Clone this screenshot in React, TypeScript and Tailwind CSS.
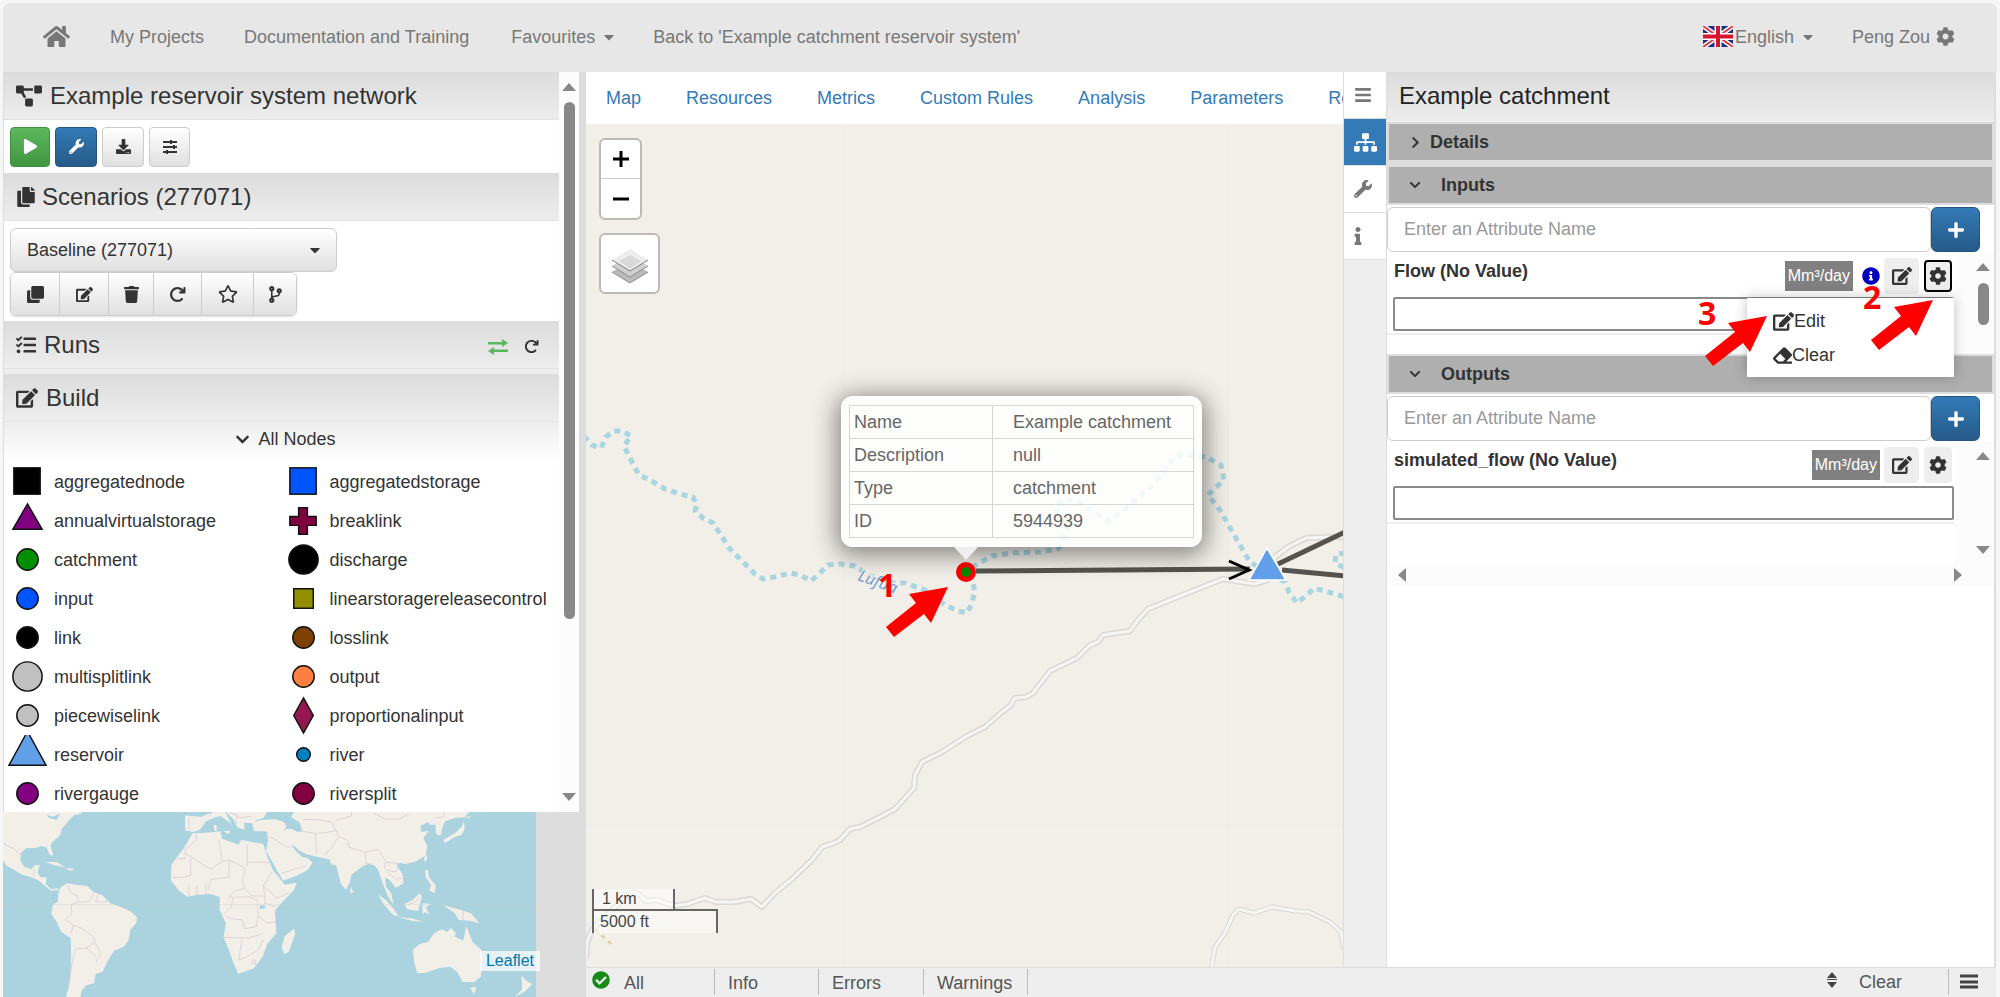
import React, { useState } from "react";
import {
  FaBars,
  FaCaretDown,
  FaCheckCircle,
  FaChevronDown,
  FaChevronRight,
  FaClone,
  FaCodeBranch,
  FaCog,
  FaCopy,
  FaDownload,
  FaEdit,
  FaEraser,
  FaHome,
  FaInfo,
  FaInfoCircle,
  FaPlay,
  FaPlus,
  FaProjectDiagram,
  FaRegStar,
  FaSitemap,
  FaTasks,
  FaTrash,
  FaWrench,
} from "react-icons/fa";
import { FaArrowRotateRight } from "react-icons/fa6";

const tabs = [
  "Map",
  "Resources",
  "Metrics",
  "Custom Rules",
  "Analysis",
  "Parameters",
  "Reports",
];

const outline = { stroke: "#111", strokeWidth: 1.5 };

const nodeTypes = [
  { name: "aggregatednode", shape: <rect x="6" y="6" width="27" height="27" fill="#000" {...outline} /> },
  { name: "aggregatedstorage", shape: <rect x="6" y="6" width="27" height="27" fill="#0055ff" {...outline} /> },
  { name: "annualvirtualstorage", shape: <path d="M20 3 L35 29 H5 Z" fill="#800080" {...outline} /> },
  { name: "breaklink", shape: <path d="M15 7 h9 v9 h9 v9 h-9 v9 h-9 v-9 h-9 v-9 h9 Z" fill="#800040" {...outline} /> },
  { name: "catchment", shape: <circle cx="20" cy="20" r="11" fill="#008f00" {...outline} /> },
  { name: "discharge", shape: <circle cx="20" cy="20" r="15" fill="#000" {...outline} /> },
  { name: "input", shape: <circle cx="20" cy="20" r="11" fill="#0055ff" {...outline} /> },
  { name: "linearstoragereleasecontrol", shape: <rect x="10" y="10" width="20" height="20" fill="#929000" {...outline} /> },
  { name: "link", shape: <circle cx="20" cy="20" r="11" fill="#000" {...outline} /> },
  { name: "losslink", shape: <circle cx="20" cy="20" r="11" fill="#804000" {...outline} /> },
  { name: "multisplitlink", shape: <circle cx="20" cy="20" r="15" fill="#c0c0c0" {...outline} /> },
  { name: "output", shape: <circle cx="20" cy="20" r="11" fill="#ff8040" {...outline} /> },
  { name: "piecewiselink", shape: <circle cx="20" cy="20" r="11" fill="#c0c0c0" {...outline} /> },
  { name: "proportionalinput", shape: <path d="M20 2 L30 20 L20 38 L10 20 Z" fill="#941751" {...outline} /> },
  { name: "reservoir", shape: <path d="M18 0 L1 31 H39 L22 0" fill="#629fe9" {...outline} /> },
  { name: "river", shape: <circle cx="20" cy="20" r="7" fill="#0080c0" {...outline} /> },
  { name: "rivergauge", shape: <circle cx="20" cy="20" r="11" fill="#800080" {...outline} /> },
  { name: "riversplit", shape: <circle cx="20" cy="20" r="11" fill="#800040" {...outline} /> },
];

const popupRows = [
  ["Name", "Example catchment"],
  ["Description", "null"],
  ["Type", "catchment"],
  ["ID", "5944939"],
];

const scenarioActions = [
  { label: "Clone", icon: <FaClone />, width: "w-[48px]" },
  { label: "Edit", icon: <FaEdit />, width: "w-[49px]" },
  { label: "Delete", icon: <FaTrash />, width: "w-[45px]" },
  { label: "Reload", icon: <FaArrowRotateRight />, width: "w-[48px]" },
  { label: "Favourite", icon: <FaRegStar size={20} />, width: "w-[52px]" },
  { label: "Branch", icon: <FaCodeBranch />, width: "w-[43px]" },
];

const Triangle = ({ dir, className = "" }: { dir: "up" | "down" | "left" | "right"; className?: string }) => {
  const paths = {
    up: "M1 11 L8 3 L15 11 Z",
    down: "M1 5 L8 13 L15 5 Z",
    left: "M12 1 L4 8 L12 15 Z",
    right: "M4 1 L12 8 L4 15 Z",
  };
  return (
    <svg viewBox="0 0 16 16" className={`size-4 shrink-0 ${className}`} fill="#888">
      <path d={paths[dir]} />
    </svg>
  );
};

const PanelHeader = ({ icon, title, children }: { icon?: React.ReactNode; title: string; children?: React.ReactNode }) => (
  <div className="flex h-12 shrink-0 items-center border-b border-[#e3e3e3] bg-linear-to-b from-[#dcdcdc] to-[#ededed] px-3 text-2xl text-[#333]">
    {icon}
    <h2 className="grow whitespace-nowrap">{title}</h2>
    {children}
  </div>
);

const UkFlag = () => (
  <svg viewBox="0 0 30 21" className="h-[21px] w-[30px]">
    <rect width="30" height="21" fill="#1b2f7f" />
    <path d="M0 0 L30 21 M30 0 L0 21" stroke="#fff" strokeWidth="5" />
    <path d="M0 0 L30 21 M30 0 L0 21" stroke="#e0404f" strokeWidth="2" />
    <path d="M15 0 V21 M0 10.5 H30" stroke="#fff" strokeWidth="7" />
    <path d="M15 0 V21 M0 10.5 H30" stroke="#d5152e" strokeWidth="4" />
  </svg>
);

const Pointer = ({ className }: { className: string }) => (
  <svg viewBox="0 0 62 50" className={`pointer-events-none absolute z-20 h-[50px] w-[62px] ${className}`} fill="#f00">
    <path d="M62 0 L23 7 L30 16 L0 40 L8 50 L38 27 L45 36 Z" />
  </svg>
);

const Navbar = () => (
  <nav className="mx-[3px] mt-[3px] flex h-[69px] shrink-0 items-center rounded-t-lg bg-[#e7e7e7] pb-[2px] text-lg whitespace-nowrap text-[#777]">
    <a href="#home" aria-label="Home" className="pl-10">
      <FaHome size={27} />
    </a>
    <a href="#projects" className="pl-10">My Projects</a>
    <a href="#docs" className="pl-10">Documentation and Training</a>
    <a href="#favourites" className="flex items-center gap-[6px] pl-[42px]">
      Favourites <FaCaretDown size={16} />
    </a>
    <a href="#back" className="pl-9">Back to 'Example catchment reservoir system'</a>
    <div className="grow" />
    <a href="#language" className="flex items-center pr-9">
      <UkFlag />
      <span className="px-[2px]">English</span>
      <FaCaretDown size={16} className="ml-1" />
    </a>
    <a href="#user" className="flex items-center gap-[6px] pr-[42px]">
      Peng Zou <FaCog size={19} />
    </a>
  </nav>
);

const toolButton = "flex h-10 items-center justify-center rounded border text-[17px]";
const lightButton = "border-[#ccc] bg-linear-to-b from-white to-[#e0e0e0] text-[#333]";
const blueButton = "border-[#245580] bg-linear-to-b from-[#337ab7] to-[#265a88] text-white";

const NetworkPanel = () => (
  <div className="flex min-h-0 grow bg-white">
    <div className="flex min-w-0 grow flex-col overflow-hidden border-l border-[#ddd]">
      <PanelHeader icon={<FaProjectDiagram size={26} className="mr-2" />} title="Example reservoir system network" />
      <div className="flex h-[53px] shrink-0 items-center gap-[5px] pl-[6px]">
        <button aria-label="Run" className={`${toolButton} w-10 border-[#3e8f3e] bg-linear-to-b from-[#5cb85c] to-[#419641] text-white`}>
          <FaPlay size={15} />
        </button>
        <button aria-label="Tools" className={`${toolButton} ${blueButton} w-[42px]`}>
          <FaWrench size={15} />
        </button>
        <button aria-label="Download" className={`${toolButton} ${lightButton} w-[42px]`}>
          <FaDownload size={15} />
        </button>
        <button aria-label="Settings" className={`${toolButton} ${lightButton} w-[41px]`}>
          <svg viewBox="0 0 16 14" className="h-[14px] w-4" stroke="currentColor" strokeWidth="2">
            <path d="M1 2 H15 M1 7 H15 M1 12 H15" />
            <path d="M9 0 V4 M12 5 V9 M5 10 V14" />
          </svg>
        </button>
      </div>

      <PanelHeader icon={<FaCopy size={20} className="mr-[6px]" />} title="Scenarios (277071)" />
      <div className="shrink-0 px-[6px] pt-[7px] pb-[5px]">
        <div className="relative w-[327px]">
          <select aria-label="Scenario" className={`h-11 w-full appearance-none rounded-md border pl-4 text-lg ${lightButton}`}>
            <option>Baseline (277071)</option>
          </select>
          <FaCaretDown className="pointer-events-none absolute top-[14px] right-[14px] text-[#333]" size={16} />
        </div>
        <div className="inline-flex overflow-hidden rounded-md border border-[#ccc] text-[#333] shadow-sm">
          {scenarioActions.map((action, i) => (
            <button
              key={action.label}
              aria-label={action.label}
              className={`flex h-[42px] items-center justify-center bg-linear-to-b from-white to-[#e0e0e0] text-[17px] ${action.width} ${i > 0 ? "border-l border-[#ccc]" : ""}`}
            >
              {action.icon}
            </button>
          ))}
        </div>
      </div>

      <div className="shrink-0 bg-[#ededed] pb-[5px]">
        <PanelHeader icon={<FaTasks size={20} className="mr-2" />} title="Runs">
          <button aria-label="Sync" className="mt-1 mr-4">
            <svg viewBox="0 0 20 16" className="h-4 w-5" fill="#5cb85c">
              <path d="M0 3 H14 V0 L20 4 L14 8 V5.500 H0 Z M20 10.500 H6 V8 L0 12 L6 16 V13 H20 Z" />
            </svg>
          </button>
          <button aria-label="Refresh" className="mt-1 mr-2">
            <FaArrowRotateRight size={15} />
          </button>
        </PanelHeader>
      </div>
      <PanelHeader icon={<FaEdit size={22} className="mr-2" />} title="Build" />
      <button className="flex h-10 shrink-0 items-center justify-center gap-2 bg-linear-to-b from-[#eee] to-white pb-[6px] pl-2 text-lg text-[#333]">
        <FaChevronDown size={15} /> All Nodes
      </button>
      <ul className="grid shrink-0 grid-cols-2 pr-1 text-lg text-[#333]">
        {nodeTypes.map((node) => (
          <li key={node.name} className="flex h-[39px] items-center gap-[7px] pl-1 whitespace-nowrap">
            <svg viewBox="0 0 40 40" className="h-[39px] w-[39px] shrink-0">
              {node.shape}
            </svg>
            {node.name}
          </li>
        ))}
      </ul>
    </div>
    <div className="flex w-5 shrink-0 flex-col items-center bg-[#fcfcfc] py-2">
      <Triangle dir="up" />
      <div className="mt-[6px] h-[517px] w-[11px] rounded-full bg-[#888]" />
      <div className="grow" />
      <Triangle dir="down" />
    </div>
  </div>
);

const WorldMap = () => (
  <div className="relative h-[185px] w-[533px] shrink-0 bg-[#aad3df]">
    <svg viewBox="10 66 1392 555" preserveAspectRatio="none" className="size-full">
      <g fill="#f2efe9">
        <path d="M10 66 H218 L212 72 L195 76 L185 88 L176 100 L163 118 L160 135 L140 155 L134 166 L140 190 L138 200 L130 190 L124 172 L110 168 L95 174 L70 175 L57 188 L55 210 L65 230 L85 238 L92 226 L106 225 L100 248 L108 262 L124 262 L122 282 L135 298 L152 295 L157 303 L150 300 L135 302 L118 286 L104 272 L85 262 L60 254 L40 240 L20 228 L10 210 Z" />
        <path d="M160 292 L178 280 L200 284 L230 288 L246 306 L270 316 L290 340 L320 352 L345 365 L360 382 L358 400 L342 420 L338 450 L326 470 L300 482 L285 510 L270 545 L252 552 L248 580 L228 585 L215 602 L212 621 H175 L186 560 L188 500 L187 445 L162 425 L150 395 L136 372 L140 345 L153 335 L155 310 Z" />
        <path d="M485 76 L500 78 L528 80 L540 74 L560 66 L590 66 L612 112 L605 100 L590 88 L578 78 L560 84 L540 94 L526 118 L510 125 L486 122 Z" />
        <path d="M592 66 H700 L690 84 L672 90 L662 100 L640 98 L640 120 L622 112 L612 88 Z M560 105 H568 V122 H562 Z M585 124 L603 122 L600 132 Z" />
        <path d="M660 98 L680 90 L720 88 L745 96 L750 112 L738 122 L705 126 L690 124 L666 124 Z" />
        <path d="M700 124 L740 116 L765 118 L780 126 L792 124 L785 98 L762 80 L770 66 H1228 L1215 82 L1190 84 L1165 94 L1158 110 L1152 138 L1140 130 L1140 104 L1125 104 L1120 96 L1100 108 L1102 126 L1122 122 L1108 144 L1118 168 L1114 196 L1090 214 L1060 222 L1046 218 L1038 226 L1054 254 L1056 280 L1036 294 L1020 270 L1008 262 L1010 290 L1024 310 L1030 344 L1016 320 L1002 282 L990 240 L980 226 L968 222 L950 228 L920 254 L915 280 L905 300 L892 280 L880 225 L868 224 L862 208 L830 200 L800 192 L782 180 L765 162 L772 180 L792 202 L806 204 L818 218 L806 240 L780 256 L742 272 L725 240 L708 205 L697 184 L702 150 Z" />
        <path d="M505 130 L540 128 L578 124 L582 146 L625 164 L632 150 L690 162 L700 200 L715 240 L738 272 L745 284 L777 278 L770 300 L740 335 L720 362 L722 400 L724 430 L700 462 L688 500 L665 535 L625 551 L612 520 L600 480 L586 442 L592 400 L576 360 L576 320 L550 312 L520 314 L490 320 L468 300 L448 270 L450 225 L465 200 L482 175 Z" />
        <path d="M770 416 L773 432 L756 486 L744 492 L738 470 L746 438 Z" />
        <path d="M917 290 L925 306 L918 312 Z M990 314 L1010 330 L1030 356 L1042 378 L1030 376 L1005 344 Z M1038 380 L1080 386 L1112 396 L1078 392 Z M1058 342 L1080 330 L1098 310 L1104 322 L1094 362 L1066 358 Z M1106 340 L1128 342 L1114 352 L1124 374 L1112 366 L1106 374 Z M1112 240 L1120 240 L1122 262 L1140 286 L1138 310 L1124 302 L1128 284 L1114 262 Z M1160 346 L1178 352 L1200 358 L1232 370 L1254 400 L1230 392 L1200 390 L1190 370 Z M1115 190 L1118 205 L1112 218 L1110 204 Z" />
        <path d="M1216 84 L1234 76 L1226 84 Z M1214 94 L1216 118 L1208 134 L1188 142 L1164 160 L1160 150 L1190 130 L1208 110 Z" />
        <path d="M1080 480 L1098 462 L1120 456 L1136 430 L1156 418 L1170 426 L1180 414 L1192 428 L1190 440 L1212 452 L1220 408 L1236 455 L1258 478 L1264 500 L1258 560 L1240 576 L1210 576 L1196 545 L1178 530 L1150 534 L1114 548 L1092 550 L1084 515 Z M1230 592 L1246 592 L1240 614 Z" />
        <path d="M1364 556 L1378 574 L1392 582 L1374 604 L1346 621 L1366 598 Z" />
        <path d="M120 216 L150 216 L172 232 L145 226 Z M172 234 L198 236 L186 242 Z" />
      </g>
      <path d="M680 346 h14 v10 h-14 Z M124 74 L140 80 L160 70 L150 90 L130 84 Z" fill="#aad3df" />
      <g fill="none" stroke="#d8c6d2" strokeWidth="2">
        <path d="M10 158 L28 172 L40 176 L56 196 M92 240 L90 262 M178 284 L186 306 L206 320 L204 338 L188 344 L190 370 L172 388 L194 406 L188 430 M206 336 L236 334 L246 312 M256 316 L252 334 L282 336 M194 406 L214 414 L246 440 L250 456 L228 474 L200 476 L190 520 L180 600 M250 458 L266 490 L252 516 M228 474 L252 500" />
        <path d="M514 130 L516 148 L486 178 L486 190 L552 238 L582 214 L574 150 M486 190 V206 H466 M500 204 L500 256 L482 262 L452 262 M648 164 V230 M648 216 L706 218 M582 214 L602 210 L642 234 L636 270 L640 296 L614 304 L600 320 M602 212 L600 262 L552 268 L546 300 M640 294 L660 318 L694 318 L690 286 M712 246 L690 288 L726 324 L758 308 M496 290 V318 M516 286 V314 M540 280 V312 M600 320 L612 322 L606 350 L586 374 M612 322 L650 320 L674 330 L676 376 L672 410 L640 416 L636 390 L606 386 L592 378 M586 442 L650 444 L688 432 M634 446 L626 510 L648 500 L676 480 L690 450 M676 378 L698 398 L722 396 M662 510 h8 v12 h-8 Z M694 318 L694 340 L722 350" />
        <path d="M704 140 L718 146 L748 170 L770 172 M736 250 L776 236 L802 228 M742 96 L762 108 L742 122 M790 124 L824 130 L850 128 L880 122 L868 96 L836 90 L794 88 M826 130 L828 190 M850 196 L872 166 L886 140 L910 150 L914 172 L956 186 L990 178 L1010 214 L1006 236 M880 122 L888 142 M980 70 L1010 88 L1048 86 L1070 70 M880 90 L920 78 V66 M1010 216 L1044 222 L1036 246 L1012 240 M1012 244 L1036 268 L1052 264 M956 188 L958 222 L972 222 M1140 84 L1162 80 V66 M1212 362 V394 M1068 344 L1088 336 L1098 322 M600 66 L630 84 L660 78 M620 70 V100 M496 86 V120 M556 66 L548 78" />
      </g>
      <path d="M10 344 H1402" stroke="#c5d3cf" strokeWidth="1" />
    </svg>
    <a href="#leaflet" className="absolute -right-1 bottom-[26px] bg-white/70 px-[6px] text-base/5 text-[#0078a8]">
      Leaflet
    </a>
  </div>
);

const river =
  "M584 436 L592 445 L601 448 L606 437 L613 431 L622 431 L631 436 L624 446 L631 460 L639 475 L650 480 L665 489 L680 494 L693 497 L697 505 L695 511 L703 518 L713 523 L722 537 L730 549 L742 561 L755 574 L763 579 L775 577 L790 573 L800 575 L811 581 L820 573 L828 565 L840 564 L855 566 L868 575 L893 583 L905 583 L925 590 L945 605 L958 611 L967 613 L971 605 L975 592 L973 583 L970 575";
const riverEast =
  "M972 567 L992 556 L1013 553 L1040 552 L1058 549 L1066 533 L1070 523 L1058 513 L1056 505 L1066 499 L1077 502 L1095 513 L1109 521 L1120 513 L1151 487 L1175 457 L1185 454 L1206 457 L1221 465 L1224 480 L1208 495 L1220 510 L1233 533 L1250 562 L1285 582 L1289 592 L1297 603 L1307 595 L1314 588 L1328 592 L1345 597";
const road =
  "M586 958 L587 942 L592 930 L612 910 L626 897 L634 892 L640 895 L646 901 L657 900 L674 906 L687 904 L705 898 L716 902 L734 902 L751 899 L762 907 L775 893 L792 879 L812 860 L822 847 L834 843 L840 840 L850 829 L860 827 L880 817 L895 809 L914 788 L915 775 L922 762 L942 752 L967 736 L985 727 L1002 712 L1010 706 L1015 698 L1026 697 L1033 693 L1050 671 L1077 658 L1090 645 L1098 642 L1103 635 L1130 631 L1138 620 L1148 609 L1175 598 L1195 590 L1223 579 L1254 584 L1268 580 L1275 557 L1288 547 L1306 538 L1330 537 L1345 537";
const roadSouth =
  "M1211 970 L1215 947 L1225 933 L1233 915 L1239 909 L1254 913 L1272 907 L1295 911 L1309 912 L1330 922 L1341 932 L1344 950";

const MapView = () => {
  const [zoom, setZoom] = useState(12);
  return (
    <div className="relative min-h-0 grow overflow-hidden bg-[#f2efe9]" data-zoom={zoom}>
      <svg viewBox="586 124 757 843" preserveAspectRatio="xMinYMin slice" className="absolute inset-0 size-full" fill="none">
        <path d="M844 124 V967 M1228 124 V967 M586 826 H1343" stroke="#ecebe7" />
        <g strokeLinejoin="round">
          <path d={road} stroke="#d9d8d5" strokeWidth="6" />
          <path d={road} stroke="#f5f5f3" strokeWidth="3" />
          <path d={roadSouth} stroke="#d9d8d5" strokeWidth="5" />
          <path d={roadSouth} stroke="#f5f5f3" strokeWidth="3" />
        </g>
        <g stroke="#a9d5e1" strokeWidth="5" strokeDasharray="6 5" strokeLinejoin="round">
          <path d={river} />
          <path d={riverEast} />
          <path d="M1345 553 L1336 554 L1335 563 L1345 568" />
        </g>
        <path d="M595 929 L612 945" stroke="#dcc9a0" strokeWidth="2" strokeDasharray="4 5" />
        <text x="857" y="580" transform="rotate(20 857 580)" fontSize="16" fontStyle="italic" fontFamily="Noto Sans, sans-serif" fill="#6d9fd0" stroke="#f2efe9" strokeWidth="3" paintOrder="stroke">
          Lufua
        </text>
        <g stroke="#55534f" strokeWidth="5">
          <path d="M976 571 L1250 569" />
          <path d="M1278 564 L1345 532" />
          <path d="M1282 570 L1345 576" />
        </g>
        <path d="M1229 561 L1249 570 L1229 579" stroke="#000" strokeWidth="3" />
        <path d="M1267 548 L1249 580 H1286 Z" fill="#629fe9" stroke="#fff" strokeWidth="1.5" />
        <circle cx="966" cy="572" r="10" fill="#f00" />
        <circle cx="966" cy="572" r="5" fill="#008f00" />
      </svg>

      <div className="absolute top-[14px] left-[13px] flex w-[43px] flex-col rounded-md border-2 border-[#bdbab6] bg-white">
        <button aria-label="Zoom in" onClick={() => setZoom(zoom + 1)} className="flex h-[39px] items-center justify-center border-b border-[#ccc]">
          <svg viewBox="0 0 16 16" className="size-4" stroke="#000" strokeWidth="3">
            <path d="M0 8 H16 M8 0 V16" />
          </svg>
        </button>
        <button aria-label="Zoom out" onClick={() => setZoom(zoom - 1)} className="flex h-[39px] items-center justify-center">
          <svg viewBox="0 0 16 16" className="size-4" stroke="#000" strokeWidth="3">
            <path d="M0 8 H16" />
          </svg>
        </button>
      </div>
      <button aria-label="Layers" className="absolute top-[109px] left-[13px] flex size-[61px] items-center justify-center rounded-md border-2 border-[#bdbab6] bg-white">
        <svg viewBox="0 0 36 34" className="mt-1 h-[34px] w-9">
          <path d="M0 23 L18 34 L36 23 L18 12 Z" fill="#b9b9b9" />
          <path d="M0 23 L18 34 L36 23" stroke="#8b8b8b" fill="none" />
          <path d="M0 17 L18 28 L36 17 L18 6 Z" fill="#cfcfcf" />
          <path d="M0 17 L18 28 L36 17" stroke="#8b8b8b" fill="none" />
          <path d="M0 11 L18 22 L36 11 L18 0 Z" fill="#ededed" />
          <path d="M7 12 L18 6 L29 12 L18 20 Z" fill="#d9d9d9" />
          <path d="M0 11 L18 22 L36 11" stroke="#7d7d7d" fill="none" />
        </svg>
      </button>

      {/* node popup */}
      <div className="absolute top-[272px] left-[255px] w-[361px]">
        <div className="rounded-xl bg-white/85 px-2 py-[9px] shadow-[0_4px_24px_4px_rgba(0,0,0,0.45)]">
          <table className="w-full border-collapse text-lg text-[#666]">
            <tbody>
              {popupRows.map(([label, value]) => (
                <tr key={label} className="h-[33px]">
                  <th className="w-[143px] border border-[#d5d5d5] px-1 text-left font-normal">{label}</th>
                  <td className="border border-[#d5d5d5] pl-5">{value}</td>
                </tr>
              ))}
            </tbody>
          </table>
        </div>
        <svg viewBox="0 0 24 13" className="ml-[113px] h-[13px] w-6">
          <path d="M0 0 H24 L12 13 Z" fill="#efeff0" />
        </svg>
      </div>

      <span className="absolute top-[437px] left-[292px] z-20 font-['Open_Sans'] text-[32px] leading-[48px] font-bold text-[#f00]">1</span>
      <Pointer className="top-[463px] left-[300px]" />

      <div className="absolute bottom-[34px] left-[6px] text-base text-[#444]">
        <div className="flex h-5 w-[83px] items-center border-x-2 border-[#666] bg-white/50 pl-2">1 km</div>
        <div className="flex h-6 w-[126px] items-center border-2 border-b-0 border-[#666] bg-white/50 pl-[6px]">5000 ft</div>
      </div>
    </div>
  );
};

const MessageBar = () => (
  <footer className="flex h-[30px] shrink-0 items-center border-t border-[#ddd] bg-[#eee] pb-[2px] text-lg text-[#555]">
    <FaCheckCircle size={18} className="mr-[14px] mb-1 ml-[6px] text-[#178a17]" />
    <button className="h-[26px] w-[91px] border-r border-[#bbb] text-left">All</button>
    <button className="h-[26px] w-[104px] border-r border-[#bbb] pl-[13px] text-left">Info</button>
    <button className="h-[26px] w-[105px] border-r border-[#bbb] pl-[13px] text-left">Errors</button>
    <button className="h-[26px] w-[104px] border-r border-[#bbb] pl-[13px] text-left">Warnings</button>
    <div className="grow" />
    <button aria-label="Resize" className="mr-[21px] mb-1">
      <svg viewBox="0 0 12 16" className="h-4 w-3" fill="#444">
        <path d="M6 0 L11 6 H1 Z M1 7 H11 V8 H1 Z M1 10 H11 L6 16 Z" />
      </svg>
    </button>
    <button className="mr-[46px]">Clear</button>
    <button aria-label="Messages" className="flex h-[26px] w-12 items-center border-l border-[#bbb] pl-[11px]">
      <svg viewBox="0 0 18 15" className="h-[15px] w-[18px]" stroke="#444" strokeWidth="3">
        <path d="M0 2 H18 M0 8 H18 M0 13 H18" />
      </svg>
    </button>
  </footer>
);

const sideTabs = [
  { label: "Menu", icon: <FaBars size={18} />, active: false },
  { label: "Network", icon: <FaSitemap size={23} />, active: true },
  { label: "Tools", icon: <FaWrench size={18} />, active: false },
  { label: "Info", icon: <FaInfo size={18} className="w-2" />, active: false },
];

const GroupBar = ({ title, open }: { title: string; open: boolean }) => (
  <button className={`flex h-10 w-full items-center border-2 border-[#ddd] bg-[#afafaf] pl-5 text-lg font-bold text-[#333] ${open ? "gap-5" : "gap-2"}`}>
    {open ? <FaChevronDown size={12} /> : <FaChevronRight size={13} />}
    {title}
  </button>
);

const AttributeSearch = ({ id }: { id: string }) => (
  <div className="flex">
    <input
      aria-label={id}
      placeholder="Enter an Attribute Name"
      className="h-[45px] min-w-0 grow rounded-md border border-[#ccc] bg-white px-4 text-lg placeholder-[#999]"
    />
    <button aria-label={`Add to ${id}`} className={`mr-[14px] flex h-[45px] w-[49px] items-center justify-center rounded-md border ${blueButton}`}>
      <FaPlus size={18} />
    </button>
  </div>
);

const AttributeRow = ({ name, info, focused, children }: { name: string; info?: boolean; focused?: boolean; children?: React.ReactNode }) => (
  <div className="relative min-w-0 grow">
    <div className="flex h-[45px] items-center pt-[3px] pl-[7px] text-[#333]">
      <label htmlFor={name} className="grow self-start pt-[2px] text-lg font-bold">
        {name} (No Value)
      </label>
      <span className="flex h-[30px] items-center bg-[#808080] px-[3px] text-base text-white">Mm³/day</span>
      {info && <FaInfoCircle size={18} className="ml-[9px] text-[#0000c0]" />}
      <button aria-label="Edit" className="ml-1 flex h-9 w-[35px] items-center justify-center rounded bg-[#eee]">
        <FaEdit size={20} />
      </button>
      <button
        aria-label="Options"
        className={`mr-[2px] ml-[5px] flex w-7 items-center justify-center rounded bg-[#eee] ${focused ? "h-8 border-2 border-black" : "h-9"}`}
      >
        <FaCog size={18} className="shrink-0" />
      </button>
    </div>
    <div className="border-b-2 border-[#eee] pb-[2px] pl-[6px]">
      <input id={name} className="block h-[34px] w-full rounded-[2px] border-2 border-[#8a8a8a] bg-white px-2 text-lg" />
    </div>
    {children}
  </div>
);

const AttributePanel = () => (
  <aside className="relative flex w-[610px] shrink-0 flex-col border-r-2 border-l border-[#ddd] bg-white">
    <div className="flex h-[50px] items-center bg-linear-to-b from-[#dcdcdc] to-[#ededed] pb-[2px] pl-3 text-2xl text-[#222]">
      Example catchment
    </div>
    <GroupBar title="Details" open={false} />
    <div className="h-[3px] bg-[#ddd]" />
    <GroupBar title="Inputs" open />
    <div className="pt-[2px]">
      <AttributeSearch id="Inputs" />
    </div>
    <div className="flex h-[102px]">
      <AttributeRow name="Flow" info focused>
        <div className="absolute top-[46px] right-0 z-10 flex h-[79px] w-[207px] flex-col bg-white pt-[6px] pl-[26px] text-lg text-[#333] shadow-[0_0_12px_rgba(0,0,0,0.25)]">
          <button className="flex h-[34px] items-center">
            <FaEdit size={21} /> Edit
          </button>
          <button className="flex h-[34px] items-center">
            <FaEraser size={19} /> Clear
          </button>
        </div>
        <span className="absolute top-[21px] left-[476px] z-20 font-['Open_Sans'] text-[32px] leading-[48px] font-bold text-[#f00]">2</span>
        <span className="absolute top-[37px] left-[311px] z-20 font-['Open_Sans'] text-[32px] leading-[48px] font-bold text-[#f00]">3</span>
        <Pointer className="top-[48px] left-[484px]" />
        <Pointer className="top-[64px] left-[318px]" />
      </AttributeRow>
      <div className="flex w-10 shrink-0 flex-col items-center bg-[#fcfcfc] pt-2 pl-[18px]">
        <Triangle dir="up" />
        <div className="mt-[7px] h-[42px] w-[11px] rounded-full bg-[#888]" />
      </div>
    </div>
    <GroupBar title="Outputs" open />
    <div className="pt-[2px]">
      <AttributeSearch id="Outputs" />
    </div>
    <div className="flex h-[124px]">
      <AttributeRow name="simulated_flow" />
      <div className="flex w-10 shrink-0 flex-col items-center justify-between bg-[#fcfcfc] py-2 pl-[18px]">
        <Triangle dir="up" />
        <Triangle dir="down" />
      </div>
    </div>
    <div className="flex h-5 items-center justify-between bg-[#fcfcfc] pr-7 pl-[7px]">
      <Triangle dir="left" />
      <Triangle dir="right" />
    </div>
  </aside>
);

export default function App() {
  const [activeTab, setActiveTab] = useState("Map");

  return (
    <div className="flex h-screen flex-col overflow-hidden bg-[#f6f6f6] font-['Liberation_Sans',Arial,sans-serif]">
      <Navbar />
      <div className="flex min-h-0 grow pr-1 pl-[3px]">
        <div className="flex w-[583px] shrink-0 flex-col bg-[#dcdcdc] pr-[7px]">
          <NetworkPanel />
          <WorldMap />
        </div>
        <div className="flex min-w-0 grow flex-col">
          <div className="flex min-h-0 grow">
            <main className="flex min-w-0 grow flex-col">
              <div className="flex h-[52px] shrink-0 items-center gap-[45px] overflow-hidden bg-white pl-5 text-lg whitespace-nowrap text-[#337ab7]">
                {tabs.map((tab) => (
                  <a key={tab} href={`#${tab}`} onClick={() => setActiveTab(tab)} aria-current={tab === activeTab}>
                    {tab}
                  </a>
                ))}
              </div>
              <MapView />
            </main>
            <div className="flex w-[43px] shrink-0 flex-col border-l border-[#ddd] bg-[#eee]">
              {sideTabs.map((item) => (
                <button
                  key={item.label}
                  aria-label={item.label}
                  className={`flex h-[47px] items-center border-b border-[#ddd] pl-[10px] ${item.active ? "bg-[#337ab7] text-white" : "bg-white text-[#777]"}`}
                >
                  {item.icon}
                </button>
              ))}
            </div>
            <AttributePanel />
          </div>
          <MessageBar />
        </div>
      </div>
    </div>
  );
}
